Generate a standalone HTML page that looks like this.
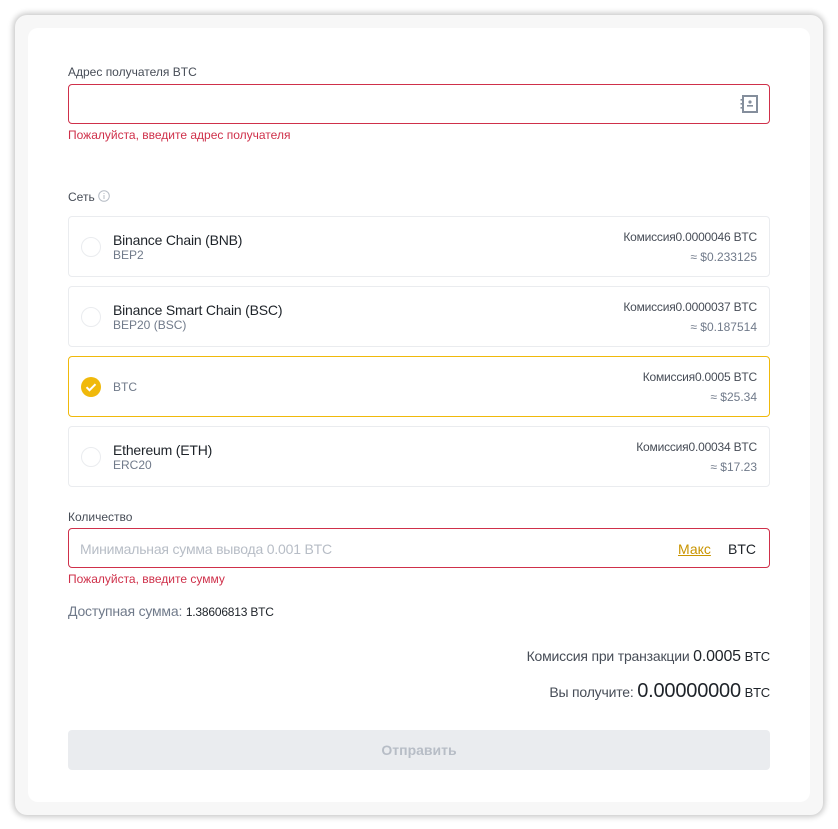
<!DOCTYPE html>
<html><head><meta charset="utf-8"><style>
*{box-sizing:border-box;margin:0;padding:0}
body{width:838px;height:829px;background:#fff;font-family:"Liberation Sans",sans-serif;position:relative;overflow:hidden;color:#1e2329}
.outer{position:absolute;left:15px;top:15px;width:808px;height:800px;background:#f7f7f7;border-radius:12px;box-shadow:0 0 6px 2px rgba(0,0,0,.22)}
.inner{position:absolute;left:28px;top:28px;width:782px;height:774px;background:#fff;border-radius:10px}
.a{position:absolute}
.lbl{font-size:12px;color:#474d57}
.err{font-size:12px;color:#cf304a}
.inp{left:68px;width:702px;height:40px;border:1px solid #cf304a;border-radius:4px}
.card{left:68px;width:702px;height:61px;border:1px solid #eaecef;border-radius:4px}
.card.sel{border-color:#f0b90b}
.rad{position:absolute;left:12px;top:20px;width:20px;height:20px;border:1px solid #eaecef;border-radius:50%}
.t1{position:absolute;left:44px;top:15px;font-size:14px;color:#1e2329;letter-spacing:-0.2px}
.t2{position:absolute;left:44px;top:31px;font-size:12px;color:#707a8a}
.f1{position:absolute;right:12px;top:13px;font-size:12px;color:#474d57;letter-spacing:-0.2px}
.f2{position:absolute;right:12px;top:33px;font-size:12px;color:#707a8a}
</style></head><body>
<div class="outer"></div><div class="inner"></div>
<div class="a lbl" style="left:68px;top:65px">Адрес получателя BTC</div>
<div class="a inp" style="top:84px"></div>
<svg class="a" style="left:739px;top:94px" width="20" height="20" viewBox="0 0 20 20"><rect x="4" y="2" width="14" height="16" fill="none" stroke="#848e9c" stroke-width="2"/><rect x="1.5" y="5" width="3" height="1.6" fill="#848e9c"/><rect x="1.5" y="9" width="3" height="1.6" fill="#848e9c"/><rect x="1.5" y="13" width="3" height="1.6" fill="#848e9c"/><circle cx="11" cy="8" r="1.6" fill="#848e9c"/><rect x="8" y="11" width="6" height="1.6" fill="#848e9c"/></svg>
<div class="a err" style="left:68px;top:128px">Пожалуйста, введите адрес получателя</div>
<div class="a lbl" style="left:68px;top:190px">Сеть</div>
<svg class="a" style="left:98px;top:190px" width="12" height="12" viewBox="0 0 12 12"><circle cx="6" cy="6" r="5.3" fill="none" stroke="#b7bdc6"/><rect x="5.5" y="5" width="1" height="4" fill="#b7bdc6"/><rect x="5.5" y="3" width="1" height="1" fill="#b7bdc6"/></svg>
<div class="a card" style="top:216px"><div class="rad"></div><div class="t1">Binance Chain (BNB)</div><div class="t2">BEP2</div><div class="f1">Комиссия0.0000046 BTC</div><div class="f2">≈ $0.233125</div></div>
<div class="a card" style="top:286px"><div class="rad"></div><div class="t1">Binance Smart Chain (BSC)</div><div class="t2">BEP20 (BSC)</div><div class="f1">Комиссия0.0000037 BTC</div><div class="f2">≈ $0.187514</div></div>
<div class="a card sel" style="top:356px"><svg style="position:absolute;left:12px;top:20px" width="20" height="20" viewBox="0 0 20 20"><circle cx="10" cy="10" r="10" fill="#f0b90b"/><path d="M5.5 10.2l3 3 6-6" fill="none" stroke="#fff" stroke-width="2"/></svg><div class="t2" style="top:23px">BTC</div><div class="f1">Комиссия0.0005 BTC</div><div class="f2">≈ $25.34</div></div>
<div class="a card" style="top:426px"><div class="rad"></div><div class="t1">Ethereum (ETH)</div><div class="t2">ERC20</div><div class="f1">Комиссия0.00034 BTC</div><div class="f2">≈ $17.23</div></div>
<div class="a lbl" style="left:68px;top:510px">Количество</div>
<div class="a inp" style="top:528px"></div>
<div class="a" style="left:80px;top:541px;font-size:14px;color:#b7bdc6;letter-spacing:-0.2px">Минимальная сумма вывода 0.001 BTC</div>
<div class="a" style="left:678px;top:541px;font-size:14px;color:#c99400;text-decoration:underline">Макс</div>
<div class="a" style="left:728px;top:541px;font-size:14px;color:#1e2329">BTC</div>
<div class="a err" style="left:68px;top:572px">Пожалуйста, введите сумму</div>
<div class="a" style="left:68px;top:603px;font-size:14px;color:#707a8a;letter-spacing:-0.2px">Доступная сумма: <span style="font-size:12px;color:#1e2329">1.38606813 BTC</span></div>
<div class="a" style="right:68px;top:648px;font-size:14px;color:#474d57;text-align:right;letter-spacing:-0.2px">Комиссия при транзакции <span style="font-size:16px;color:#1e2329">0.0005</span> <span style="font-size:13px;color:#1e2329">BTC</span></div>
<div class="a" style="right:68px;top:680px;font-size:14px;color:#474d57;text-align:right;letter-spacing:-0.2px">Вы получите: <span style="font-size:20px;color:#1e2329">0.00000000</span> <span style="font-size:13px;color:#1e2329">BTC</span></div>
<div class="a" style="left:68px;top:730px;width:702px;height:40px;background:#eaecef;border-radius:4px;text-align:center;line-height:40px;font-size:14px;font-weight:bold;color:#b7bdc6">Отправить</div>
</body></html>
